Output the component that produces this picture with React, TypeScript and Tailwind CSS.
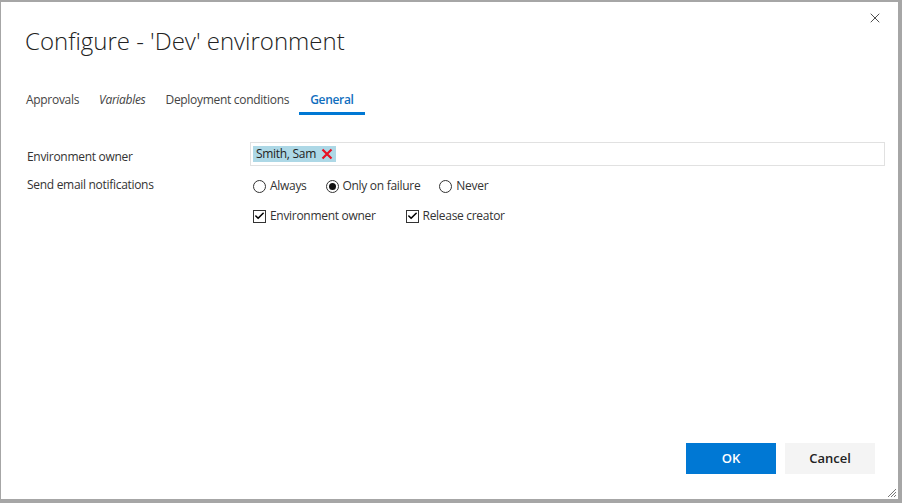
import { Check, X } from "lucide-react";

const font = { fontFamily: '"Open Sans", "Noto Sans", sans-serif' };

function Radio({ checked, label }: { checked?: boolean; label: string }) {
  return (
    <label className="flex items-center gap-[4px]">
      <span className="flex size-[13px] items-center justify-center rounded-full border border-[#333]">
        {checked ? <span className="size-[7px] rounded-full bg-[#111]" /> : null}
      </span>
      <span>{label}</span>
    </label>
  );
}

function CheckBox({ label }: { label: string }) {
  return (
    <label className="flex items-center gap-[4px]">
      <span className="flex size-[13px] items-center justify-center border border-[#333] bg-white">
        <Check className="size-[12px] text-black" strokeWidth={3.5} />
      </span>
      <span>{label}</span>
    </label>
  );
}

export default function App() {
  return (
    <div className="flex h-[503px] w-[902px] bg-[#a6a6a6] pb-[4px] pr-[4px]" style={font}>
      <div className="relative flex flex-1 flex-col border-l border-t-2 border-[#a6a6a6] bg-white">
        <button type="button" className="absolute right-[15px] top-[8px] text-[#222]">
          <X className="size-[16px]" strokeWidth={1.2} />
        </button>

        <h1 className="ml-[24px] mt-[23px] text-[24px] font-light leading-[32px] text-[#222]">
          Configure - 'Dev' environment
        </h1>

        <nav className="ml-[15px] mt-[33px] flex text-[12px] tracking-[-0.3px] text-[#444]">
          <span className="px-[10px] pb-[6px] pt-[1px]">Approvals</span>
          <span className="px-[10px] pb-[6px] pt-[1px] italic">Variables</span>
          <span className="px-[10px] pb-[6px] pt-[1px]">Deployment conditions</span>
          <span className="border-b-[3px] border-[#0078d4] px-[11px] pb-[3px] pt-[1px] font-semibold text-[#106ebe]">
            General
          </span>
        </nav>

        <div className="ml-[26px] mr-[13px] mt-[27px] grid grid-cols-[223px_1fr] text-[12px] tracking-[-0.3px] text-[#333]">
          <div className="flex h-[24px] items-center pt-[6px]">Environment owner</div>
          <div className="flex h-[24px] items-center border border-[#e1e1e1] px-[2px]">
            <span className="flex h-[16px] items-center gap-[5px] bg-[#add8e6] pl-[3px] pr-[3px] text-[#222]">
              Smith, Sam
              <svg width="12" height="12" viewBox="0 0 12 12">
                <path d="M1.5 1.5L10.5 10.5M10.5 1.5L1.5 10.5" stroke="#e81123" strokeWidth="2.2" />
              </svg>
            </span>
          </div>

          <div className="mt-[9px] flex h-[20px] items-center">Send email notifications</div>
          <div className="mt-[10px] flex h-[20px] items-center gap-[19px] pl-[3px]">
            <Radio label="Always" />
            <Radio checked label="Only on failure" />
            <Radio label="Never" />
          </div>

          <div />
          <div className="mt-[10px] flex h-[20px] items-center gap-[30px] pl-[3px]">
            <CheckBox label="Environment owner" />
            <CheckBox label="Release creator" />
          </div>
        </div>

        <div className="mt-auto flex justify-end gap-[9px] pb-[25px] pr-[23px]">
          <button type="button" className="h-[31px] w-[90px] bg-[#0078d4] text-[13px] font-semibold text-white">
            OK
          </button>
          <button type="button" className="h-[31px] w-[90px] bg-[#f4f4f4] text-[13px] font-semibold text-[#222]">
            Cancel
          </button>
        </div>

        <svg className="absolute bottom-[1px] right-[1px]" width="10" height="10" viewBox="0 0 10 10">
          <path d="M9 1L1 9M9 4L4 9M9 7L7 9" stroke="#777" strokeWidth="1" />
        </svg>
      </div>
    </div>
  );
}
